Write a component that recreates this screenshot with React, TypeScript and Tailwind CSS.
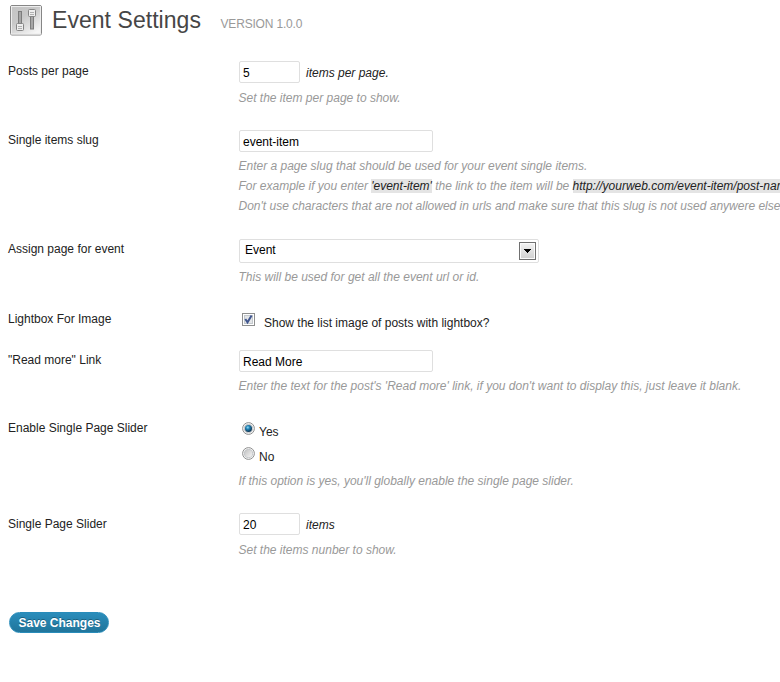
import type { ReactNode } from "react";

function Row({ label, height, children }: { label: string; height: string; children: ReactNode }) {
  return (
    <div className={`flex ${height}`}>
      <div className="w-[230px] shrink-0 text-[#222]">{label}</div>
      <div className="flex flex-col items-start whitespace-nowrap">{children}</div>
    </div>
  );
}

function Field({ value, width }: { value: string; width: string }) {
  return (
    <input
      defaultValue={value}
      className={`ml-px h-[22px] rounded-[2px] border border-[#dfdfdf] bg-white px-[3px] pt-px text-black outline-none ${width}`}
    />
  );
}

function Hint({ children, gap }: { children: ReactNode; gap: string }) {
  return <p className={`pl-[0.5px] text-[#999] italic ${gap}`}>{children}</p>;
}

function Mark({ children }: { children: ReactNode }) {
  return <code className="bg-[#e4e4e4] font-['Liberation_Sans',Arial,sans-serif] text-[12px] text-[#222]">{children}</code>;
}

function SettingsIcon() {
  return (
    <svg width="32" height="31" viewBox="0 0 32 31" className="shrink-0">
      <defs>
        <linearGradient id="plate" x1="0" y1="0" x2="0.7" y2="1">
          <stop offset="0" stopColor="#c4c4c4" />
          <stop offset="0.45" stopColor="#c8c8c8" />
          <stop offset="1" stopColor="#f6f6f6" />
        </linearGradient>
      </defs>
      <rect x="0.5" y="0.5" width="31" height="29.5" rx="1.5" fill="url(#plate)" stroke="#868686" />
      <rect x="1.5" y="1.5" width="29" height="27.5" fill="none" stroke="#ededed" />
      <rect x="8.5" y="6.5" width="3" height="13" fill="#a6a6a6" stroke="#7c7c7c" />
      <rect x="20.5" y="11.5" width="3" height="12.5" fill="#a6a6a6" stroke="#7c7c7c" />
      <rect x="6.5" y="18.5" width="7" height="7" rx="1" fill="#eee" stroke="#858585" />
      <path d="M8 21.5h4M8 23.5h4" stroke="#b0b0b0" />
      <rect x="18.5" y="4.5" width="7" height="7" rx="1" fill="#eee" stroke="#858585" />
      <path d="M20 7.5h4M20 9.5h4" stroke="#b0b0b0" />
    </svg>
  );
}

function Radio({ checked }: { checked?: boolean }) {
  return (
    <svg width="13" height="13" viewBox="0 0 13 13" className="shrink-0">
      <defs>
        <linearGradient id="well" x1="0" y1="0" x2="1" y2="1">
          <stop offset="0" stopColor="#bfbfbf" />
          <stop offset="1" stopColor="#f8f8f8" />
        </linearGradient>
        <radialGradient id="bead" cx="0.4" cy="0.35" r="0.65">
          <stop offset="0" stopColor="#8fdcf7" />
          <stop offset="0.4" stopColor="#2182b5" />
          <stop offset="1" stopColor="#0b3150" />
        </radialGradient>
      </defs>
      <circle cx="6.5" cy="6.5" r="5.9" fill="#f6f6f6" stroke="#8e8f8f" />
      <circle cx="6.5" cy="6.5" r="4.1" fill="url(#well)" stroke="#b5b9bd" strokeWidth="0.7" />
      {checked && <circle cx="6.5" cy="6.5" r="3.5" fill="url(#bead)" />}
    </svg>
  );
}

export default function App() {
  return (
    <main className="h-[682px] w-[780px] overflow-hidden bg-white pl-2 font-['Liberation_Sans',Arial,sans-serif] text-[12px] leading-5 text-[#222]">
      <header className="flex h-[61px] items-start pt-[5px] pl-[2px]">
        <SettingsIcon />
        <h1 className="ml-[10px] w-[149px] text-[23px] leading-[30px] tracking-[0.05px] whitespace-nowrap text-[#464646]">Event Settings</h1>
        <span className="ml-[19.5px] pt-[9px] tracking-[-0.18px] whitespace-nowrap text-[#999]">VERSION 1.0.0</span>
      </header>

      <Row label="Posts per page" height="h-[69px]">
        <div className="flex gap-[6px]">
          <Field value="5" width="w-[61px]" />
          <em className="pt-[2px]">items per page.</em>
        </div>
        <Hint gap="mt-[5px]">Set the item per page to show.</Hint>
      </Row>

      <Row label="Single items slug" height="h-[109px]">
        <Field value="event-item" width="w-[194px]" />
        <Hint gap="mt-1">
          Enter a page slug that should be used for your event single items.
          <br />
          For example if you enter <Mark>'event-item'</Mark> the link to the item will be{" "}
          <Mark>http://yourweb.com/event-item/post-name</Mark>
          <br />
          Don't use characters that are not allowed in urls and make sure that this slug is not used anywere else
        </Hint>
      </Row>

      <Row label="Assign page for event" height="h-[70px]">
        <div className="ml-px flex h-6 w-[300px] items-center justify-between rounded-[2px] border border-[#dfdfdf] pr-[2px] pl-[5px] text-black">
          <span className="pb-[2px]">Event</span>
          <span className="flex h-[18px] w-[17px] items-center justify-center border border-[#707070] bg-linear-to-b from-[#f3f3f3] to-[#cfcfcf] shadow-[inset_0_0_0_1px_#fafafa]">
            <svg width="7" height="4" viewBox="0 0 7 4" shapeRendering="crispEdges">
              <path d="M0 0h7v1H0zM1 1h5v1H1zM2 2h3v1H2zM3 3h1v1H3z" fill="#000" />
            </svg>
          </span>
        </div>
        <Hint gap="mt-1">This will be used for get all the event url or id.</Hint>
      </Row>

      <Row label="Lightbox For Image" height="h-[41px]">
        <label className="flex pl-1">
          <svg width="13" height="13" viewBox="0 0 13 13" className="mt-1 shrink-0">
            <rect x="0.5" y="0.5" width="12" height="12" fill="#fff" stroke="#8e8f8f" />
            <rect x="2.5" y="2.5" width="8" height="8" fill="#e4e6e8" stroke="#c4c9ce" />
            <path d="M3.3 6L5.5 9.3L9.6 2.6" fill="none" stroke="#41578f" strokeWidth="2" />
          </svg>
          <span className="ml-[9px] pt-1">Show the list image of posts with lightbox?</span>
        </label>
      </Row>

      <Row label={'"Read more" Link'} height="h-[68px]">
        <Field value="Read More" width="w-[194px]" />
        <Hint gap="mt-1">
          Enter the text for the post's 'Read more' link, if you don't want to display this, just leave it blank.
        </Hint>
      </Row>

      <Row label="Enable Single Page Slider" height="h-[96px]">
        <label className="flex h-[25px] pt-[4px] pl-[3.5px]">
          <Radio checked />
          <span className="ml-[4.5px]">Yes</span>
        </label>
        <label className="flex h-[25px] pt-[4px] pl-[3.5px]">
          <Radio />
          <span className="ml-[4.5px]">No</span>
        </label>
        <Hint gap="mt-[3px]">If this option is yes, you'll globally enable the single page slider.</Hint>
      </Row>

      <Row label="Single Page Slider" height="h-[98px]">
        <div className="-mt-px flex gap-[6px]">
          <Field value="20" width="w-[61px]" />
          <em className="pt-[2px]">items</em>
        </div>
        <Hint gap="mt-[5px]">Set the items nunber to show.</Hint>
      </Row>

      <button className="ml-px h-[21px] w-[100px] rounded-full border border-[#298cba] bg-linear-to-b from-[#2a8dbb] to-[#21759b] pt-px pl-px text-center leading-[19px] font-bold whitespace-nowrap text-white [text-shadow:0_-1px_0_rgba(0,0,0,0.3)]">
        Save Changes
      </button>
    </main>
  );
}
